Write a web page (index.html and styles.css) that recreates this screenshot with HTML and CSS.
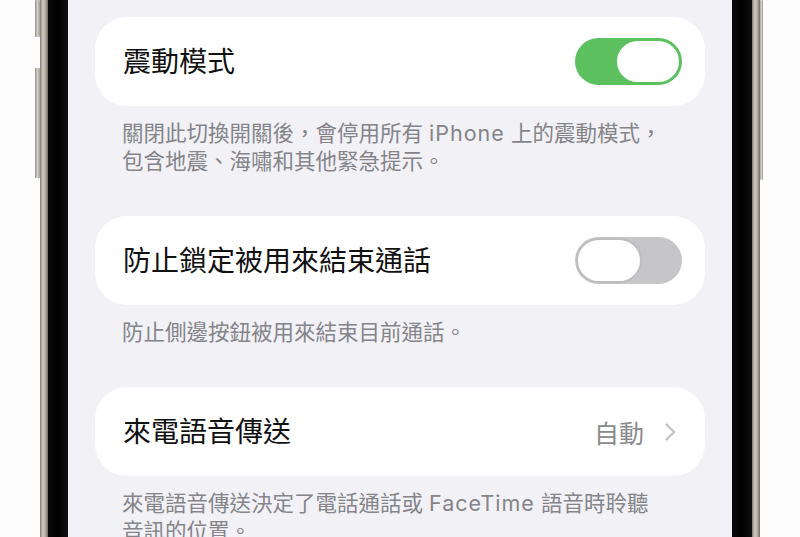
FILE: index.html
```html
<!DOCTYPE html>
<html lang="zh-Hant">
<head>
    <meta charset="UTF-8" />
    <meta name="viewport" content="width=device-width, initial-scale=1" />
    <title>震動模式</title>
    <link rel="stylesheet" href="styles.css">
</head>
<body>
    <div class="phone">
        <div class="outside outside-left">
            <div class="side-buttons">
                <div class="side-btn btn-top"></div>
                <div class="side-btn btn-volume"></div>
            </div>
        </div>
        <div class="rail"></div>
        <div class="bezel"></div>

        <div class="screen">
            <div class="card">
                <span class="card-title">震動模式</span>
                <div class="toggle toggle-on"><div class="knob"></div></div>
            </div>
            <p class="footnote">關閉此切換開關後，會停用所有 <span class="latin">iPhone</span> 上的震動模式，<br>包含地震、海嘯和其他緊急提示。</p>

            <div class="card">
                <span class="card-title">防止鎖定被用來結束通話</span>
                <div class="toggle toggle-off"><div class="knob"></div></div>
            </div>
            <p class="footnote">防止側邊按鈕被用來結束目前通話。</p>

            <div class="card">
                <span class="card-title">來電語音傳送</span>
                <div class="card-value">
                    <span>自動</span>
                    <svg class="chevron" width="13" height="20" viewBox="0 0 13 20">
                        <polyline points="2.5,2.5 10,10 2.5,17.5" fill="none" stroke="#c4c4c7" stroke-width="2.4" stroke-linecap="round" stroke-linejoin="round"/>
                    </svg>
                </div>
            </div>
            <p class="footnote">來電語音傳送決定了電話通話或 <span class="latin">FaceTime</span> 語音時聆聽<br>音訊的位置。</p>
        </div>

        <div class="bezel"></div>
        <div class="rail"></div>
        <div class="outside outside-right">
            <div class="side-btn btn-power"></div>
        </div>
    </div>
</body>
</html>
```

FILE: styles.css
```css
* {
    box-sizing: border-box;
}

html, body {
    margin: 0;
    height: 100%;
    overflow: hidden;
    background-color: #fdfdfd;
    font-family: "Inter", "Noto Sans CJK TC", sans-serif;
}

.phone {
    display: flex;
    height: 537px;
}

.outside {
    display: flex;
    background-color: #fdfdfd;
}

.outside-left {
    width: 40px;
    justify-content: flex-end;
}

.outside-right {
    flex: 1;
}

.side-buttons {
    display: flex;
    flex-direction: column;
    gap: 31px;
    width: 5px;
}

.side-btn {
    background: linear-gradient(90deg, #8c887f, #d6d2c9 45%, #a29e95);
    border-radius: 1px;
}

.btn-top {
    height: 37px;
}

.btn-volume {
    height: 110px;
}

.btn-power {
    width: 3px;
    height: 180px;
    background: linear-gradient(90deg, #a6a29a, #d7d3ca 50%, #8d8980);
}

.rail {
    width: 8px;
    background: linear-gradient(90deg, #7f7b73, #cfcbc2 35%, #b4afa5 65%, #6e6a63);
}

.bezel {
    width: 20px;
    background: linear-gradient(90deg, #0a0a0a, #000 50%, #111);
}

.screen {
    width: 664px;
    background-color: #f1f1f6;
    padding: 17px 27px 0 27px;
}

.card {
    display: flex;
    align-items: center;
    justify-content: space-between;
    height: 89px;
    padding: 0 23px 0 28px;
    background-color: #fff;
    border-radius: 32px;
}

.card-title {
    font-size: 28px;
    line-height: 34px;
    color: #111;
}

.toggle {
    display: flex;
    width: 107px;
    height: 47px;
    padding: 1px;
    border-radius: 24px;
}

.toggle-on {
    justify-content: flex-end;
    background-color: #5cc05f;
}

.toggle-off {
    justify-content: flex-start;
    background-color: #c6c6c9;
}

.knob {
    width: 66px;
    height: 45px;
    border-radius: 23px;
    background-color: #fff;
    border: 2px solid #5cc05f;
}

.toggle-off .knob {
    border-color: #bdbdc0;
}

.card-value {
    display: flex;
    align-items: center;
    gap: 20px;
    font-size: 25px;
    color: #8a8a8e;
    padding-right: 5px;
}

.footnote {
    margin: 0 0 41px 0;
    padding: 13px 0 0 27px;
    font-size: 21.5px;
    line-height: 28px;
    color: #848489;
}

.latin {
    letter-spacing: 1px;
}
```
